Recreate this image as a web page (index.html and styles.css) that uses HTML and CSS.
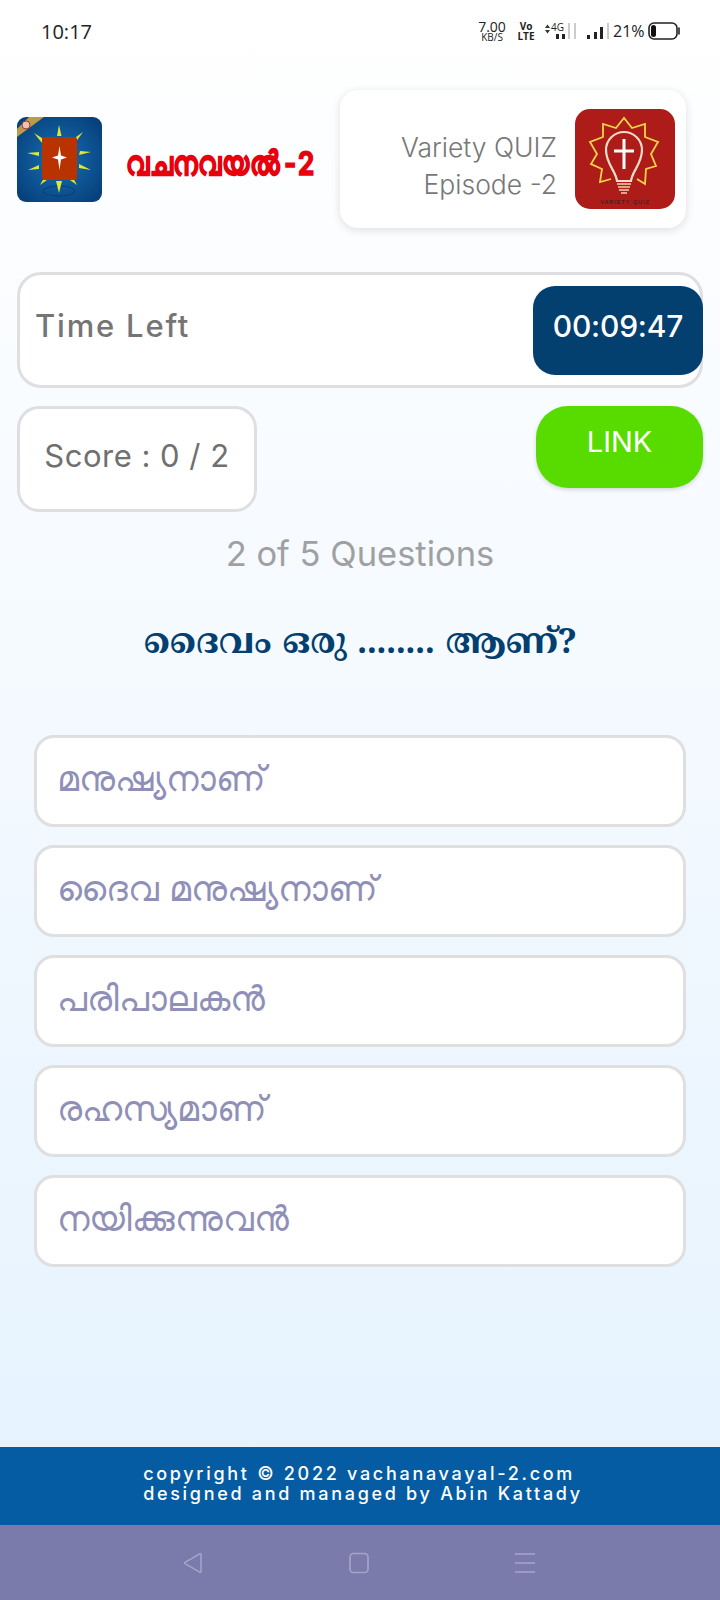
FILE: index.html
```html
<!DOCTYPE html>
<html lang="ml">
<head>
<meta charset="UTF-8">
<meta name="viewport" content="width=device-width, initial-scale=1.0">
<title>Vachanavayal Quiz</title>
<link rel="stylesheet" href="styles.css">
</head>
<body>

<div class="status-bar">
  <div class="clock">10:17</div>
  <div class="status-icons">
    <div class="net-speed"><span>7.00</span><small>KB/S</small></div>
    <div class="volte"><span>Vo</span><span>LTE</span></div>
    <div class="sim">
      <span class="sim-label">4G</span>
      <svg class="sim-bars" width="32" height="24" viewBox="0 0 32 24">
        <path d="M0 9L2.500 5.500L5 9ZM0 11L5 11L2.500 14.500Z" fill="#333"/>
        <rect x="11" y="15" width="3" height="5" fill="#222"/>
        <rect x="17" y="15" width="3" height="5" fill="#222"/>
        <rect x="23" y="4" width="2" height="16" fill="#ccc"/>
        <rect x="29" y="4" width="2" height="16" fill="#ccc"/>
      </svg>
    </div>
    <svg class="signal" width="24" height="24" viewBox="0 0 24 24">
      <rect x="1" y="16" width="3" height="4" fill="#222"/>
      <rect x="8" y="13" width="3" height="7" fill="#222"/>
      <rect x="14" y="8" width="3" height="12" fill="#222"/>
      <rect x="21" y="4" width="2" height="16" fill="#ccc"/>
    </svg>
    <div class="battery-pct">21%</div>
    <svg class="battery" width="33" height="20" viewBox="0 0 33 20">
      <rect x="1" y="2" width="28" height="16" rx="5" fill="none" stroke="#222" stroke-width="1.6"/>
      <rect x="3" y="4" width="5" height="12" rx="2.5" fill="#111"/>
      <path d="M31 7v6" stroke="#222" stroke-width="1.6" stroke-linecap="round"/>
    </svg>
  </div>
</div>

<div class="top-row">
  <div class="brand">
    <svg class="brand-logo" width="85" height="85" viewBox="0 0 85 85">
      <defs>
        <radialGradient id="blueGlow" cx="50%" cy="50%" r="62%">
          <stop offset="0" stop-color="#1670b4"/>
          <stop offset="1" stop-color="#07417c"/>
        </radialGradient>
        <clipPath id="logoClip"><rect width="85" height="85" rx="9"/></clipPath>
      </defs>
      <g clip-path="url(#logoClip)">
        <rect width="85" height="85" fill="url(#blueGlow)"/>
        <path d="M0 12L12 0H27L0 20Z" fill="#b99b4a"/>
        <circle cx="9" cy="8" r="4" fill="#e8c4b4" stroke="#a33" stroke-width="1"/>
        <ellipse cx="42" cy="74" rx="16" ry="5" fill="none" stroke="#0a3a70" stroke-width="0.8"/>
      </g>
      <g fill="#dfe82c">
        <path d="M42 8L44.500 19H40Z"/>
        <path d="M66 15L58 26L55 23Z"/>
        <path d="M74 35L62 38L63 34Z"/>
        <path d="M74 53L62 51L62 47Z"/>
        <path d="M60 68L53 63L56 61Z"/>
        <path d="M42 76L39 64H45Z"/>
        <path d="M23 68L27 61L30 63Z"/>
        <path d="M11 53L22 48V52Z"/>
        <path d="M10 36L22 35V39Z"/>
        <path d="M17 16L28 23L25 26Z"/>
      </g>
      <rect x="25" y="20" width="35" height="43" rx="2" fill="#b83300"/>
      <path d="M42.500 29L44 38.500L50 40.500L44 42.500L42.500 53L41 42.500L35 40.500L41 38.500Z" fill="#fff"/>
    </svg>
    <div class="brand-name">വചനവയൽ<span class="brand-num">-2</span></div>
  </div>

  <div class="episode-card">
    <div class="episode-text">Variety QUIZ<br>Episode -2</div>
    <svg class="episode-logo" width="100" height="100" viewBox="0 0 100 100">
      <rect width="100" height="100" rx="15" fill="#ad1c18"/>
      <polyline points="36,70 25,73 27,60 16,55 22,45 15,33 28,28 28,15 41,19 49,9 57,19 70,15 70,28 83,33 76,45 81,57 71,60 70,75 62,70" fill="none" stroke="#f5d547" stroke-width="1.8"/>
      <path d="M42 72C41 62 31 55 31 41A18 18 0 0 1 67 41C67 55 57 62 56 72Z" fill="none" stroke="#f6dcc6" stroke-width="2.200"/>
      <path d="M49 30V60M39 42H59" stroke="#fff" stroke-width="3"/>
      <path d="M42 75H56M43 78H55M44 81H54M46 84H52" stroke="#f3d0b0" stroke-width="1.500"/>
      <text class="episode-logo-text" x="50" y="95" text-anchor="middle">VARIETY QUIZ</text>
    </svg>
  </div>
</div>

<div class="timer-card">
  <div class="timer-label">Time Left</div>
  <div class="timer-value">00:09:47</div>
</div>

<div class="score-row">
  <div class="score-card">Score : 0 / 2</div>
  <div class="link-btn">LINK</div>
</div>

<div class="progress">2 of 5 Questions</div>

<h1 class="question">ദൈവം ഒരു ........ ആണ്?</h1>

<div class="options">
  <div class="option">മനുഷ്യനാണ്</div>
  <div class="option">ദൈവ മനുഷ്യനാണ്</div>
  <div class="option">പരിപാലകൻ</div>
  <div class="option">രഹസ്യമാണ്</div>
  <div class="option">നയിക്കുന്നുവൻ</div>
</div>

<div class="footer">
  <div class="footer-text">
    <div>copyright © 2022 vachanavayal-2.com</div>
    <div>designed and managed by Abin Kattady</div>
  </div>
</div>

<div class="nav-bar">
  <svg width="22" height="22" viewBox="0 0 22 22"><path d="M19 2.500V19.500a.8.800 0 0 1-1.300.6L3 11.600a.8.800 0 0 1 0-1.200L17.700 1.900a.8.800 0 0 1 1.300.6Z" fill="none" stroke="#a5a5cc" stroke-width="1.500"/></svg>
  <svg width="22" height="22" viewBox="0 0 22 22"><rect x="2" y="1.500" width="18" height="19" rx="3.500" fill="none" stroke="#a5a5cc" stroke-width="1.600"/></svg>
  <svg width="22" height="22" viewBox="0 0 22 22"><path d="M1 2H21M1 11H21M1 20H21" stroke="#a5a5cc" stroke-width="1.600"/></svg>
</div>

</body>
</html>
```

FILE: styles.css
```css
* {
  box-sizing: border-box;
}

body {
  margin: 0;
  width: 720px;
  height: 1600px;
  overflow: hidden;
  display: flex;
  flex-direction: column;
  font-family: Inter, "Noto Sans", sans-serif;
  background: linear-gradient(to bottom, #ffffff 0%, #f5faff 40%, #e6f3fe 91%);
}

.status-bar {
  height: 62px;
  flex-shrink: 0;
  display: flex;
  justify-content: space-between;
  align-items: center;
  padding: 0 39px 0 41px;
  color: #222;
  font-family: "Open Sans", sans-serif;
}

.clock {
  font-size: 20px;
}

.status-icons {
  display: flex;
  align-items: center;
}

.net-speed {
  display: flex;
  flex-direction: column;
  align-items: center;
  width: 30px;
  margin-right: 9px;
  font-size: 14px;
  line-height: 12px;
}

.net-speed small {
  font-size: 10px;
  line-height: 9px;
}

.volte {
  display: flex;
  flex-direction: column;
  width: 20px;
  margin-right: 9px;
  font-size: 10px;
  line-height: 10px;
  font-weight: 700;
  text-align: center;
}

.sim {
  position: relative;
  width: 32px;
  height: 24px;
  margin-right: 9px;
}

.sim-label {
  position: absolute;
  left: 6px;
  top: 3px;
  font-size: 10px;
  line-height: 11px;
}

.sim-bars {
  display: block;
}

.signal {
  display: block;
  margin-right: 3px;
}

.battery-pct {
  width: 30px;
  margin-right: 5px;
  font-size: 16px;
}

.top-row {
  display: flex;
  align-items: center;
  justify-content: space-between;
  margin-top: 28px;
  padding: 0 34px 0 17px;
}

.brand {
  display: flex;
  align-items: center;
  gap: 24px;
}

.brand-logo {
  display: block;
}

.brand-name {
  padding-top: 6px;
  color: #e8000d;
  font-size: 26.500px;
  font-weight: 700;
  -webkit-text-stroke: 1px #e8000d;
  transform: scaleY(1.25);
}

.brand-num {
  margin-left: 4px;
  letter-spacing: 2px;
}

.episode-card {
  width: 346px;
  height: 138px;
  flex-shrink: 0;
  display: flex;
  align-items: center;
  justify-content: flex-end;
  gap: 18px;
  padding-right: 11px;
  background: #fff;
  border-radius: 18px;
  box-shadow: 0 2px 10px rgba(0, 0, 0, 0.13);
}

.episode-text {
  padding-top: 13px;
  text-align: right;
  color: #777;
  font-size: 26.500px;
  font-weight: 300;
  line-height: 37px;
}

.episode-logo {
  display: block;
}

.episode-logo-text {
  font-size: 5.500px;
  letter-spacing: 1px;
  fill: #222;
  font-family: "Liberation Sans", sans-serif;
}

.timer-card {
  display: flex;
  align-items: center;
  justify-content: space-between;
  height: 116px;
  margin: 44px 17px 0;
  padding-left: 15px;
  background: #fff;
  border: 3px solid #dfdfe1;
  border-radius: 24px;
}

.timer-label {
  color: #757575;
  font-size: 31px;
  font-weight: 500;
  letter-spacing: 1.800px;
  margin-top: -10px;
}

.timer-value {
  width: 170px;
  height: 89px;
  margin-right: -3px;
  padding-bottom: 8px;
  display: flex;
  align-items: center;
  justify-content: center;
  background: #033f6f;
  color: #fff;
  font-size: 30px;
  font-weight: 500;
  letter-spacing: -0.200px;
  border-radius: 22px;
}

.score-row {
  display: flex;
  justify-content: space-between;
  align-items: flex-start;
  margin: 18px 17px 0;
}

.score-card {
  width: 240px;
  height: 106px;
  display: flex;
  align-items: center;
  justify-content: center;
  padding-bottom: 8px;
  background: #fff;
  border: 3px solid #dfdfe1;
  border-radius: 22px;
  color: #707070;
  font-size: 31px;
  letter-spacing: 0.500px;
}

.link-btn {
  width: 167px;
  height: 82px;
  display: flex;
  align-items: center;
  justify-content: center;
  padding-bottom: 12px;
  background: #58dc00;
  color: #fff;
  font-size: 29px;
  border-radius: 32px;
  box-shadow: 0 2px 4px rgba(0, 0, 0, 0.15);
}

.progress {
  margin-top: 17px;
  text-align: center;
  color: #a0a0a2;
  font-size: 34.500px;
  line-height: 50px;
}

.question {
  margin: 41px 0 0;
  text-align: center;
  color: #033f6f;
  font-family: "Noto Serif Malayalam", Inter, "Noto Sans", sans-serif;
  font-size: 35px;
  line-height: 50px;
  font-weight: 700;
}

.options {
  display: flex;
  flex-direction: column;
  gap: 18px;
  margin: 65px 34px 0;
}

.option {
  height: 92px;
  display: flex;
  align-items: center;
  padding: 0 20px 6px;
  background: #fff;
  border: 3px solid #dfdfe0;
  border-radius: 20px;
  color: #8f8fb8;
  font-size: 35px;
  font-weight: 300;
}

.footer {
  margin-top: auto;
  height: 78px;
  flex-shrink: 0;
  display: flex;
  justify-content: center;
  align-items: center;
  padding: 0 0 4px 6px;
  background: #055ca3;
  color: #fff;
  font-size: 18px;
  font-weight: 500;
  line-height: 20px;
  letter-spacing: 2.700px;
}

.nav-bar {
  height: 75px;
  flex-shrink: 0;
  display: flex;
  align-items: center;
  justify-content: space-between;
  padding: 0 184px 0 182px;
  background: #7a7aab;
}
```
